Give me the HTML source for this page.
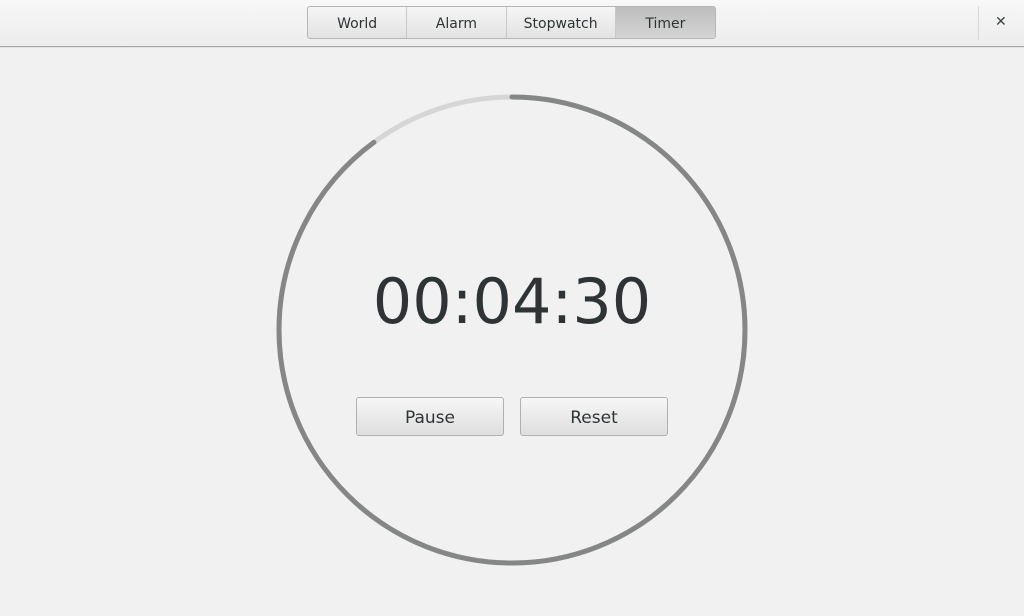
<!DOCTYPE html>
<html><head><style>
body{margin:0;width:1024px;height:616px;background:#f1f1f1;font-family:"DejaVu Sans","Liberation Sans",sans-serif;position:relative;overflow:hidden}
.hdr{position:absolute;left:0;top:0;width:1024px;height:46px;background:linear-gradient(#f8f8f8,#ececec);border-bottom:1px solid #a8a8a8;box-shadow:0 1px 0 #e0e0e0}
.tabs{position:absolute;left:307px;top:6px;width:407px;height:31px;border:1px solid #b6b6b6;border-radius:3px;display:flex;overflow:hidden;background:linear-gradient(#f6f6f6,#e2e2e2)}
.tabs div{font-size:14px;color:#2e3436;text-align:center;line-height:34px;border-right:1px solid #c8c8c8}
.tabs div.on{background:linear-gradient(#bdbdbd,#d4d4d4);border-right:none}
.sep{position:absolute;left:978px;top:6px;width:1px;height:34px;background:#d8d8d8}
.x{position:absolute;left:995px;top:14px;font-size:14px;font-weight:bold;color:#3d4446}
.time{position:absolute;left:0;width:1024px;top:260px;text-align:center;font-size:62px;color:#2e3436;line-height:84px}
.btn{position:absolute;top:397px;width:146px;height:37px;border:1px solid #b0b0b0;border-radius:3px;background:linear-gradient(#f7f7f7,#dedede);font-size:17px;color:#2e3436;text-align:center;line-height:40px}
</style></head><body>
<div class="hdr"><div class="tabs"><div style="width:99px">World</div><div style="width:99px">Alarm</div><div style="width:109px">Stopwatch</div><div class="on" style="width:100px">Timer</div></div><div class="sep"></div><div class="x">✕</div></div>
<svg style="position:absolute;left:0;top:0" width="1024" height="616">
<circle cx="512" cy="330" r="233" fill="none" stroke="#d6d6d6" stroke-width="5"/>
<circle cx="512" cy="330" r="233" fill="none" stroke="#858787" stroke-width="5" stroke-linecap="round" stroke-dasharray="1316 200" transform="rotate(-90 512 330)"/>
</svg>
<div class="time">00:04:30</div>
<div class="btn" style="left:356px">Pause</div>
<div class="btn" style="left:520px">Reset</div>
</body></html>
